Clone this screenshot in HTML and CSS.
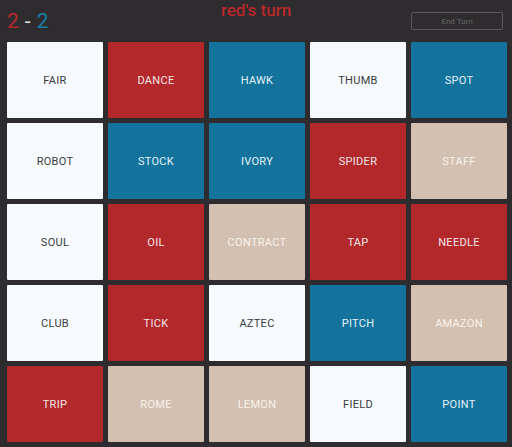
FILE: index.html
```html
<!DOCTYPE html>
<html>
<head>
<meta charset="utf-8">
<link rel="stylesheet" href="styles.css">
</head>
<body>
<div class="app">
  <header class="top">
    <div class="score"><span class="score-red">2</span><span class="score-dash">-</span><span class="score-blue">2</span></div>
    <div class="turn">red's turn</div>
    <button class="end">End Turn</button>
  </header>
  <main class="board">
    <div class="card neutral">FAIR</div>
    <div class="card red">DANCE</div>
    <div class="card blue">HAWK</div>
    <div class="card neutral">THUMB</div>
    <div class="card blue">SPOT</div>
    <div class="card neutral">ROBOT</div>
    <div class="card blue">STOCK</div>
    <div class="card blue">IVORY</div>
    <div class="card red">SPIDER</div>
    <div class="card beige">STAFF</div>
    <div class="card neutral">SOUL</div>
    <div class="card red">OIL</div>
    <div class="card beige">CONTRACT</div>
    <div class="card red">TAP</div>
    <div class="card red">NEEDLE</div>
    <div class="card neutral">CLUB</div>
    <div class="card red">TICK</div>
    <div class="card neutral">AZTEC</div>
    <div class="card blue">PITCH</div>
    <div class="card beige">AMAZON</div>
    <div class="card red">TRIP</div>
    <div class="card beige">ROME</div>
    <div class="card beige">LEMON</div>
    <div class="card neutral">FIELD</div>
    <div class="card blue">POINT</div>
  </main>
</div>
</body>
</html>
```

FILE: styles.css
```css
html, body {
  margin: 0;
  padding: 0;
  background: #2e2c2e;
}
body {
  font-family: Roboto, "Liberation Sans", sans-serif;
  width: 512px;
  height: 447px;
  overflow: hidden;
}
.app {
  display: flex;
  flex-direction: column;
}
.top {
  height: 42px;
  display: grid;
  grid-template-columns: 1fr auto 1fr;
  align-items: start;
  padding: 0 9px 0 7px;
  box-sizing: border-box;
}
.score {
  padding-top: 9px;
  font-size: 21px;
  line-height: 24px;
  font-weight: 400;
  display: flex;
  gap: 6px;
}
.score-red { color: #b8282d; }
.score-blue { color: #1a7ea4; }
.score-dash { color: #e8e8e8; }
.turn {
  color: #b8282d;
  font-size: 17px;
  line-height: 20px;
  font-weight: 500;
  margin-left: 2px;
}
.end {
  justify-self: end;
  margin-top: 12px;
  width: 92px;
  height: 18px;
  background: transparent;
  border: 1px solid #585658;
  border-radius: 2px;
  color: #6a686a;
  font-family: Roboto, "Liberation Sans", sans-serif;
  font-size: 8px;
  padding: 0;
}
.board {
  display: grid;
  grid-template-columns: repeat(5, 96px);
  grid-auto-rows: 76px;
  gap: 5px;
  padding: 0 5px 5px 7px;
}
.card {
  display: flex;
  align-items: center;
  justify-content: center;
  font-size: 11px;
  font-weight: 400;
  letter-spacing: 0.3px;
  border-radius: 1px;
}
.neutral { background: #f6faff; color: #3a3a3c; }
.red { background: #b2282b; color: #f4e6e8; }
.blue { background: #13739c; color: #e4f2f8; }
.beige { background: #d4c0b0; color: #f8f2ec; }
```
